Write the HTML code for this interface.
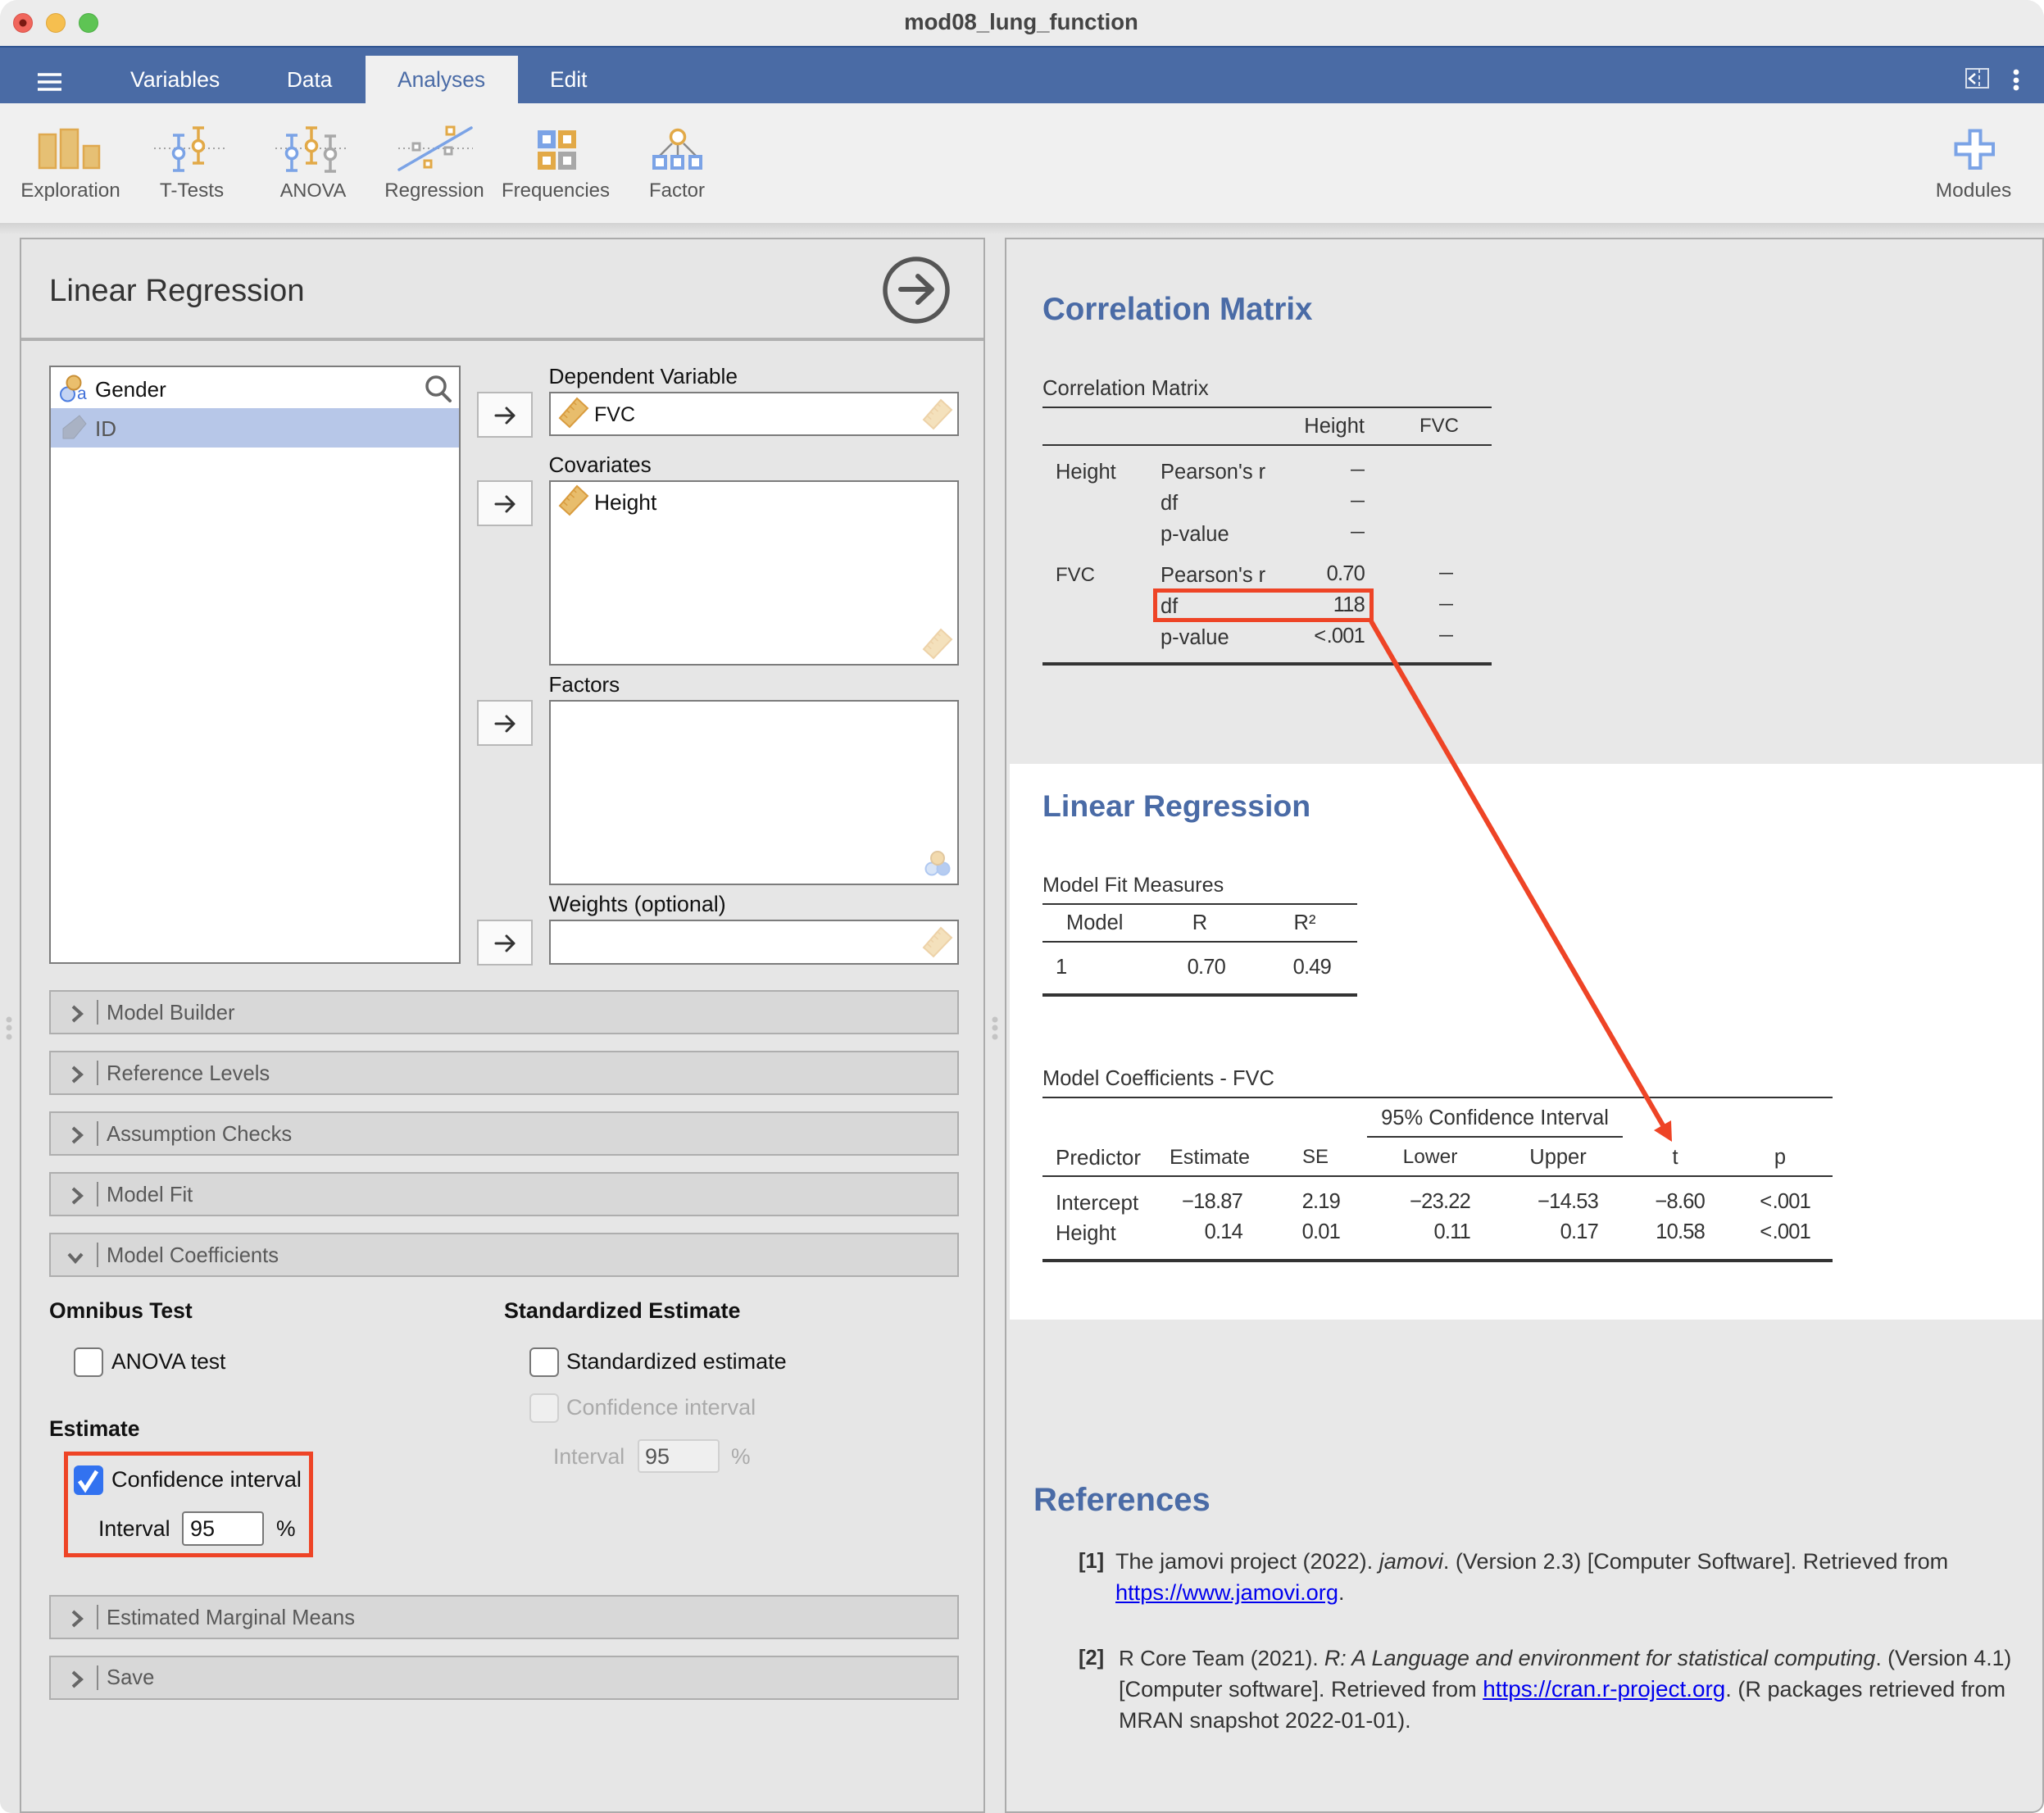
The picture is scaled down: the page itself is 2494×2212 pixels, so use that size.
<!DOCTYPE html>
<html><head><meta charset="utf-8"><title>mod08_lung_function</title>
<style>
html,body{margin:0;padding:0;background:#fff}
#w{position:relative;width:2494px;height:2212px;overflow:hidden;background:#e6e6e6;border-radius:22px 22px 14px 14px;font-family:"Liberation Sans",sans-serif;color:#333}
.b{position:absolute;box-sizing:border-box}
.t{position:absolute;line-height:0;white-space:nowrap;font-size:26px}
.r{transform:translateX(-100%)}
.c{transform:translateX(-50%)}
.u{font-size:26.5px;color:#111}
.tb{font-size:24.3px;color:#555}
.h{font-size:38.5px;font-weight:bold;color:#4a6ba6}
.v{font-size:25.5px;color:#333}
.n{font-size:25.5px;color:#333;letter-spacing:-.8px}
.lt{font-size:25.5px;color:#333;letter-spacing:-.8px;word-spacing:-5px}
.d{font-size:17px;font-weight:bold;color:#333}
.box{background:#fff;border:2px solid #7c7c7c}
.btn{background:#fafafa;border:2px solid #b8b8b8;left:582px;width:68px;height:56px}
.row{left:60px;width:1110px;height:54px;background:#d8d8d8;border:2px solid #aeaeae}
.rl{font-size:25.6px;color:#595959;left:130px}
.cb{background:#fff;border:2px solid #777;border-radius:6px;width:36px;height:36px}
a{color:#00e;text-decoration:underline}
svg{position:absolute;left:0;top:0}
</style></head><body><div id="w">
<!-- title bar -->
<div class="b" style="left:0;top:0;width:2494px;height:56px;background:#ececec"></div>
<div class="t" style="left:1246px;top:27px;font-size:27.5px;font-weight:bold;color:#444;transform:translateX(-50%)">mod08_lung_function</div>
<!-- blue bar -->
<div class="b" style="left:0;top:56px;width:2494px;height:70px;background:#4a6ba5;border-top:2px solid #2f5490"></div>
<div class="b" style="left:446px;top:68px;width:186px;height:58px;background:#f0f0f0"></div>
<div class="t" style="left:159px;top:97px;color:#fff;font-size:26.7px">Variables</div>
<div class="t" style="left:350px;top:97px;color:#fff;font-size:26.2px">Data</div>
<div class="t" style="left:485px;top:97px;color:#4a6ba6;font-size:26.4px">Analyses</div>
<div class="t" style="left:671px;top:97px;color:#fff;font-size:26.4px">Edit</div>
<!-- toolbar -->
<div class="b" style="left:0;top:126px;width:2494px;height:146px;background:#f0f0f0"></div>
<div class="b" style="left:0;top:272px;width:2494px;height:14px;background:linear-gradient(#d2d2d2,#e6e6e6)"></div>
<div class="t tb c" style="left:86px;top:233px">Exploration</div>
<div class="t tb c" style="left:234px;top:233px">T-Tests</div>
<div class="t tb c" style="left:382px;top:232px;font-size:23.5px">ANOVA</div>
<div class="t tb c" style="left:530px;top:233px;font-size:24px">Regression</div>
<div class="t tb c" style="left:678px;top:233px;font-size:24px">Frequencies</div>
<div class="t tb c" style="left:826px;top:233px;font-size:24px">Factor</div>
<div class="t tb c" style="left:2408px;top:233px;font-size:24.5px">Modules</div>
<!-- panels -->
<div class="b" style="left:24px;top:290px;width:1178px;height:1922px;border:2px solid #ababab;background:#e6e6e6"></div>
<div class="b" style="left:1226px;top:290px;width:1268px;height:1922px;border:2px solid #ababab;border-radius:0 0 14px 0;background:#e8e8e8"></div>
<div class="b" style="left:1232px;top:932px;width:1260px;height:678px;background:#fff"></div>
<div class="b" style="left:26px;top:412px;width:1174px;height:4px;background:#b0b0b0"></div>
<div class="t" style="left:60px;top:355px;font-size:38.4px;color:#333">Linear Regression</div>
<!-- source list -->
<div class="b box" style="left:60px;top:446px;width:502px;height:730px"></div>
<div class="b" style="left:62px;top:498px;width:498px;height:48px;background:#b7c7e8"></div>
<div class="t u" style="left:116px;top:475px;font-size:26px">Gender</div>
<div class="t u" style="left:116px;top:523px;color:#555;font-size:26px">ID</div>
<div class="t" style="left:94px;top:481px;font-size:21px;color:#3f6fd8">a</div>
<!-- labels -->
<div class="t u" style="left:669.5px;top:459px;font-size:26.3px">Dependent Variable</div>
<div class="t u" style="left:669.5px;top:567px;font-size:26.2px">Covariates</div>
<div class="t u" style="left:669.5px;top:835px;font-size:26px">Factors</div>
<div class="t u" style="left:669.5px;top:1103px;font-size:26.9px">Weights (optional)</div>
<div class="b btn" style="top:478px"></div>
<div class="b btn" style="top:586px"></div>
<div class="b btn" style="top:854px"></div>
<div class="b btn" style="top:1122px"></div>
<div class="b box" style="left:670px;top:478px;width:500px;height:54px"></div>
<div class="b box" style="left:670px;top:586px;width:500px;height:226px"></div>
<div class="b box" style="left:670px;top:854px;width:500px;height:226px"></div>
<div class="b box" style="left:670px;top:1122px;width:500px;height:55px"></div>
<div class="t u" style="left:725px;top:506px;font-size:25px">FVC</div>
<div class="t u" style="left:725px;top:613px;font-size:26.4px">Height</div>
<!-- collapsible rows -->
<div class="b row" style="top:1208px"></div><div class="t rl" style="top:1236px">Model Builder</div>
<div class="b row" style="top:1282px"></div><div class="t rl" style="top:1310px">Reference Levels</div>
<div class="b row" style="top:1356px"></div><div class="t rl" style="top:1384px">Assumption Checks</div>
<div class="b row" style="top:1430px"></div><div class="t rl" style="top:1458px">Model Fit</div>
<div class="b row" style="top:1504px"></div><div class="t rl" style="top:1532px">Model Coefficients</div>
<div class="b row" style="top:1946px"></div><div class="t rl" style="top:1974px">Estimated Marginal Means</div>
<div class="b row" style="top:2020px"></div><div class="t rl" style="top:2047px">Save</div>
<!-- options -->
<div class="t u" style="left:60px;top:1599px;font-weight:bold">Omnibus Test</div>
<div class="t u" style="left:615px;top:1599px;font-weight:bold;font-size:26.9px">Standardized Estimate</div>
<div class="b cb" style="left:90px;top:1644px"></div>
<div class="t u" style="left:136px;top:1661px">ANOVA test</div>
<div class="b cb" style="left:646px;top:1644px"></div>
<div class="t u" style="left:691px;top:1661px;font-size:27px">Standardized estimate</div>
<div class="b cb" style="left:646px;top:1700px;background:#efefef;border-color:#d0d0d0"></div>
<div class="t u" style="left:691px;top:1717px;color:#aaa;font-size:27px">Confidence interval</div>
<div class="t u" style="left:675px;top:1776.5px;color:#aaa;font-size:26.6px">Interval</div>
<div class="b" style="left:778px;top:1756px;width:100px;height:41px;background:#efefef;border:2px solid #d0d0d0;border-radius:4px"></div>
<div class="t u" style="left:787px;top:1777px;color:#555;font-size:27px">95</div>
<div class="t u" style="left:892px;top:1777px;color:#aaa">%</div>
<div class="t u" style="left:60px;top:1743px;font-weight:bold">Estimate</div>
<div class="b" style="left:78px;top:1771px;width:304px;height:129px;border:5px solid #ee4426"></div>
<div class="b" style="left:90px;top:1788px;width:36px;height:36px;background:#3272f0;border-radius:6px"></div>
<div class="t u" style="left:136px;top:1804.5px;font-size:27.1px">Confidence interval</div>
<div class="t u" style="left:120px;top:1865px;font-size:26.7px">Interval</div>
<div class="b" style="left:222px;top:1844px;width:100px;height:42px;background:#fff;border:2px solid #777;border-radius:4px"></div>
<div class="t u" style="left:232px;top:1865px;font-size:27px">95</div>
<div class="t u" style="left:337px;top:1865px">%</div>
<!-- results: correlation -->
<div class="t h" style="left:1272px;top:378px">Correlation Matrix</div>
<div class="t v" style="left:1272px;top:474px;font-size:25.7px">Correlation Matrix</div>
<div class="b" style="left:1272px;top:496px;width:548px;height:2px;background:#333"></div>
<div class="b" style="left:1272px;top:542px;width:548px;height:2px;background:#333"></div>
<div class="b" style="left:1272px;top:808px;width:548px;height:4px;background:#333"></div>
<div class="t v r" style="left:1665px;top:520px">Height</div>
<div class="t v c" style="left:1756px;top:520px;font-size:24px">FVC</div>
<div class="t v" style="left:1288px;top:576px">Height</div>
<div class="t v" style="left:1416px;top:576px">Pearson's r</div>
<div class="t v" style="left:1416px;top:614px">df</div>
<div class="t v" style="left:1416px;top:652px">p-value</div>
<div class="t v" style="left:1288px;top:702px;font-size:24px">FVC</div>
<div class="t v" style="left:1416px;top:702px">Pearson's r</div>
<div class="t v" style="left:1416px;top:740px">df</div>
<div class="t v" style="left:1416px;top:778px">p-value</div>
<div class="t d r" style="left:1665px;top:573px">—</div>
<div class="t d r" style="left:1665px;top:611px">—</div>
<div class="t d r" style="left:1665px;top:649px">—</div>
<div class="t n r" style="left:1665px;top:700px">0.70</div>
<div class="t n r" style="left:1665px;top:738px">118</div>
<div class="t lt r" style="left:1665px;top:776px">&lt; .001</div>
<div class="t d r" style="left:1773px;top:699px">—</div>
<div class="t d r" style="left:1773px;top:737px">—</div>
<div class="t d r" style="left:1773px;top:775px">—</div>
<div class="b" style="left:1407px;top:718px;width:269px;height:41px;border:5px solid #ee4426"></div>
<!-- linear regression -->
<div class="t h" style="left:1272px;top:983px;font-size:37.5px">Linear Regression</div>
<div class="t v" style="left:1272px;top:1080px;font-size:25.2px">Model Fit Measures</div>
<div class="b" style="left:1272px;top:1102px;width:384px;height:2px;background:#333"></div>
<div class="b" style="left:1272px;top:1148px;width:384px;height:2px;background:#333"></div>
<div class="b" style="left:1272px;top:1212px;width:384px;height:4px;background:#333"></div>
<div class="t v" style="left:1301px;top:1126px">Model</div>
<div class="t v c" style="left:1464px;top:1126px">R</div>
<div class="t v c" style="left:1592px;top:1126px">R²</div>
<div class="t v" style="left:1288px;top:1180px">1</div>
<div class="t n r" style="left:1495px;top:1180px">0.70</div>
<div class="t n r" style="left:1624px;top:1180px">0.49</div>
<div class="t v" style="left:1272px;top:1316px">Model Coefficients - FVC</div>
<div class="b" style="left:1272px;top:1338px;width:964px;height:2px;background:#333"></div>
<div class="b" style="left:1668px;top:1386px;width:312px;height:2px;background:#333"></div>
<div class="b" style="left:1272px;top:1434px;width:964px;height:2px;background:#333"></div>
<div class="b" style="left:1272px;top:1536px;width:964px;height:4px;background:#333"></div>
<div class="t v c" style="left:1824px;top:1364px">95% Confidence Interval</div>
<div class="t v" style="left:1288px;top:1412px;font-size:26px">Predictor</div>
<div class="t v" style="left:1427px;top:1412px;font-size:25.2px">Estimate</div>
<div class="t v" style="left:1589px;top:1412px;font-size:24px">SE</div>
<div class="t v c" style="left:1745px;top:1412px;font-size:24.5px">Lower</div>
<div class="t v c" style="left:1901px;top:1412px">Upper</div>
<div class="t v c" style="left:2044px;top:1412px">t</div>
<div class="t v c" style="left:2172px;top:1412px">p</div>
<div class="t v" style="left:1288px;top:1467px;font-size:26px">Intercept</div>
<div class="t n r" style="left:1516px;top:1466px">−18.87</div>
<div class="t n r" style="left:1635px;top:1466px">2.19</div>
<div class="t n r" style="left:1794px;top:1466px">−23.22</div>
<div class="t n r" style="left:1950px;top:1466px">−14.53</div>
<div class="t n r" style="left:2080px;top:1466px">−8.60</div>
<div class="t lt r" style="left:2209px;top:1466px">&lt; .001</div>
<div class="t v" style="left:1288px;top:1505px">Height</div>
<div class="t n r" style="left:1516px;top:1503px">0.14</div>
<div class="t n r" style="left:1635px;top:1503px">0.01</div>
<div class="t n r" style="left:1794px;top:1503px">0.11</div>
<div class="t n r" style="left:1950px;top:1503px">0.17</div>
<div class="t n r" style="left:2080px;top:1503px">10.58</div>
<div class="t lt r" style="left:2209px;top:1503px">&lt; .001</div>
<!-- references -->
<div class="t h" style="left:1261px;top:1830px;font-size:40px">References</div>
<div class="t v" style="left:1316px;top:1905px;font-weight:bold">[1]</div>
<div class="t v" style="left:1361px;top:1905px;font-size:27.05px">The jamovi project (2022). <i>jamovi</i>. (Version 2.3) [Computer Software]. Retrieved from</div>
<div class="t v" style="left:1361px;top:1943px;font-size:27px"><a style="font-size:27.2px">https://www.jamovi.org</a>.</div>
<div class="t v" style="left:1316px;top:2023px;font-weight:bold">[2]</div>
<div class="t v" style="left:1365px;top:2023px;font-size:26.15px">R Core Team (2021). <i style="font-size:26.85px">R: A Language and environment for statistical computing</i><span style="font-size:26.66px">. (Version 4.1)</span></div>
<div class="t v" style="left:1365px;top:2061px;font-size:27.1px">[Computer software]. Retrieved from <a style="font-size:27.9px">https://cran.r-project.org</a>. (R packages retrieved from</div>
<div class="t v" style="left:1365px;top:2099px;font-size:26.85px">MRAN snapshot 2022-01-01).</div>

<svg width="2494" height="2212" viewBox="0 0 2494 2212" fill="none">
<defs>
<g id="ruler"><polygon points="4,-18 17,-6 -5,17 -17,6" fill="#e8bd6c" stroke="#d99c3f" stroke-width="2"/><path d="M-12.8,1.2l5,4.5M-8.6,-3.6l3.5,3.2M-4.4,-8.4l5,4.5M-.2,-13.2l3.5,3.2" stroke="#d99c3f" stroke-width="1.5"/></g>
<g id="pin" stroke-width="3.5"><path d="M-7,-21H7M0,-21V22M-7,22H7"/><circle cy="1" r="6.5" fill="#fff"/></g>
</defs>
<!-- traffic lights -->
<circle cx="28" cy="28" r="11.5" fill="#f0665c" stroke="#d9534a"/><circle cx="28" cy="28" r="4.5" fill="#7a1a12"/>
<circle cx="68" cy="28" r="11.5" fill="#f6bf4f" stroke="#dfa63a"/>
<circle cx="108" cy="28" r="11.5" fill="#5ec454" stroke="#4bae44"/>
<!-- hamburger -->
<path d="M46,91H75M46,100H75M46,109H75" stroke="#fff" stroke-width="3.5"/>
<!-- collapse + kebab -->
<rect x="2399" y="84" width="27" height="23" stroke="#d5ddeb" stroke-width="2"/>
<path d="M2415,84V107" stroke="#d5ddeb" stroke-width="2" stroke-dasharray="5 3"/>
<path d="M2410,90l-7,6l7,6" stroke="#fff" stroke-width="2.5"/>
<circle cx="2460" cy="88" r="3.4" fill="#fff"/><circle cx="2460" cy="98" r="3.4" fill="#fff"/><circle cx="2460" cy="107" r="3.4" fill="#fff"/>
<!-- Exploration -->
<g fill="#e6c074" stroke="#dfa94f" stroke-width="2.5"><rect x="48" y="164" width="20" height="41"/><rect x="74" y="158" width="21" height="47"/><rect x="102" y="178" width="19" height="27"/></g>
<!-- T-tests -->
<path d="M188,181H278" stroke="#8a8a8a" stroke-width="1.5" stroke-dasharray="2 4"/>
<use href="#pin" x="218" y="186" stroke="#7ba3e6"/>
<use href="#pin" x="242" y="177" stroke="#e2a947"/>
<!-- ANOVA -->
<path d="M336,181H426" stroke="#8a8a8a" stroke-width="1.5" stroke-dasharray="2 4"/>
<use href="#pin" x="356" y="186" stroke="#7ba3e6"/>
<use href="#pin" x="380" y="177" stroke="#e2a947"/>
<use href="#pin" x="403" y="187" stroke="#a8a8a8"/>
<!-- Regression -->
<path d="M486,181H577" stroke="#8a8a8a" stroke-width="1.5" stroke-dasharray="2 4"/>
<path d="M487,207L575,156" stroke="#7ba3e6" stroke-width="3.5" stroke-linecap="round"/>
<g fill="#fff" stroke-width="3"><rect x="545" y="155" width="9" height="9" stroke="#e2a947"/><rect x="504" y="175" width="8" height="8" stroke="#a8a8a8"/><rect x="543" y="180" width="8" height="8" stroke="#a8a8a8"/><rect x="518" y="196" width="8" height="8" stroke="#e2a947"/></g>
<!-- Frequencies -->
<g fill="#fff" stroke-width="6"><rect x="659" y="162" width="16" height="16" stroke="#7ba3e6"/><rect x="684" y="162" width="16" height="16" stroke="#e2a947"/><rect x="659" y="188" width="16" height="16" stroke="#e2a947"/><rect x="684" y="188" width="16" height="16" stroke="#a8a8a8"/></g>
<!-- Factor -->
<path d="M820,175L805,190M827,176V190M834,175L849,190" stroke="#8a8a8a" stroke-width="2.5"/>
<circle cx="827" cy="167" r="8.5" fill="#fff" stroke="#e2a947" stroke-width="3.5"/>
<g fill="#fff" stroke="#7ba3e6" stroke-width="4"><rect x="798" y="191" width="14" height="14"/><rect x="820" y="191" width="13" height="14"/><rect x="842" y="191" width="13" height="14"/></g>
<!-- Modules -->
<path d="M2403.5,159.5H2416.5V175.5H2432V188.5H2416.5V205H2403.5V188.5H2386.5V175.5H2403.5Z" fill="#fff" stroke="#7ba3e6" stroke-width="4"/>
<!-- run arrow -->
<circle cx="1118" cy="354" r="38" stroke="#555" stroke-width="5.5"/>
<path d="M1099,353H1137M1120,337L1137,353L1120,369" stroke="#555" stroke-width="6" stroke-linecap="round" stroke-linejoin="round"/>
<!-- gender icon -->
<circle cx="82.5" cy="481" r="8.5" fill="#c4d4f3" stroke="#4c7de0" stroke-width="2"/>
<circle cx="90" cy="467" r="8.5" fill="#eabf6d" stroke="#c98f36" stroke-width="2"/>
<!-- search -->
<circle cx="532" cy="471" r="11" stroke="#666" stroke-width="3.5"/><path d="M540,480L549,489" stroke="#666" stroke-width="4" stroke-linecap="round"/>
<!-- ID icon -->
<polygon points="97,507 105,517 90,535 77,535 77,523" fill="#a9b2c4" stroke="#9aa3b5"/>
<!-- rulers -->
<use href="#ruler" x="700" y="504"/>
<use href="#ruler" x="700" y="611"/>
<use href="#ruler" x="1144" y="506" opacity=".45"/>
<use href="#ruler" x="1144" y="786" opacity=".45"/>
<use href="#ruler" x="1144" y="1150" opacity=".45"/>
<!-- factor icon -->
<g opacity=".55"><circle cx="1137" cy="1060" r="7.5" fill="#b7cff2" stroke="#6f9ce6" stroke-width="2"/><circle cx="1151" cy="1060" r="7.5" fill="#7ba3e6" stroke="#6f9ce6" stroke-width="2"/><circle cx="1144" cy="1047" r="8" fill="#e8bd6c" stroke="#c99a4f" stroke-width="2"/></g>
<!-- small arrows -->
<g stroke="#333" stroke-width="3" stroke-linecap="round" stroke-linejoin="round">
<path d="M605,507H627M618,498L627,507L618,516"/>
<path d="M605,615H627M618,606L627,615L618,624"/>
<path d="M605,883H627M618,874L627,883L618,892"/>
<path d="M605,1151H627M618,1142L627,1151L618,1160"/>
</g>
<!-- chevrons & dividers -->
<g stroke="#666" stroke-width="4" fill="none">
<path d="M89,1228l10,9l-10,9M89,1302l10,9l-10,9M89,1376l10,9l-10,9M89,1450l10,9l-10,9M89,1966l10,9l-10,9M89,2040l10,9l-10,9"/>
<path d="M84,1530l8,9l8,-9"/>
</g>
<g stroke="#8a8a8a" stroke-width="2"><path d="M119,1220v30M119,1294v30M119,1368v30M119,1442v30M119,1516v30M119,1958v30M119,2032v30"/></g>
<!-- handles -->
<g fill="#c4c4c4"><circle cx="11" cy="1244" r="3.5"/><circle cx="11" cy="1254" r="3.5"/><circle cx="11" cy="1265" r="3.5"/><circle cx="1214" cy="1244" r="3.5"/><circle cx="1214" cy="1254" r="3.5"/><circle cx="1214" cy="1265" r="3.5"/></g>
<!-- check mark -->
<path d="M97,1807L104,1817L118,1795" stroke="#fff" stroke-width="5" fill="none"/>
<!-- red arrow -->
<path d="M1673,758L2029,1373" stroke="#ee4426" stroke-width="6"/>
<polygon points="2040,1393 2018,1379 2039,1367" fill="#ee4426"/>
</svg>
</div></body></html>
